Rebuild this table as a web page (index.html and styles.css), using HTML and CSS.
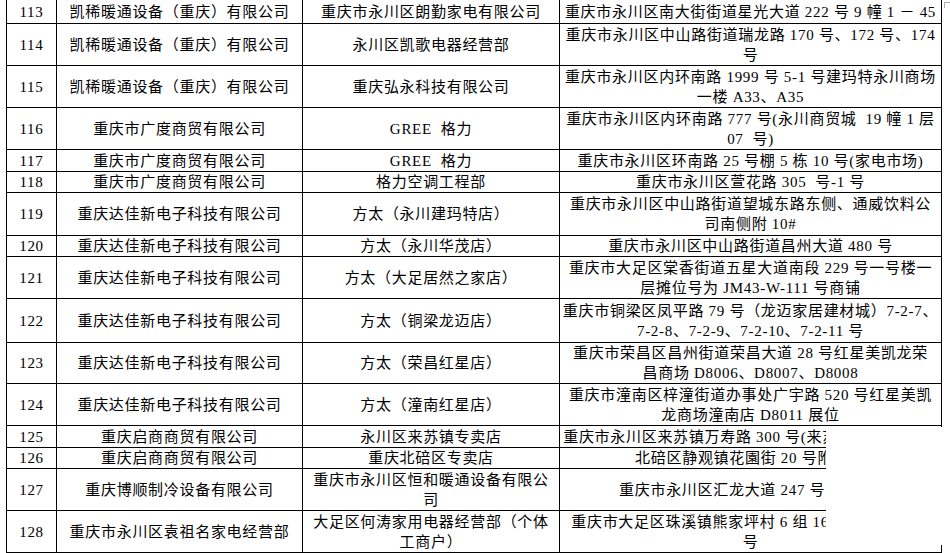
FILE: index.html
```html
<!DOCTYPE html>
<html lang="zh-CN">
<head>
<meta charset="utf-8">
<title>名单</title>
<link rel="stylesheet" href="styles.css">
</head>
<body>
<table class="list">
  <colgroup>
    <col class="c-no">
    <col class="c-co">
    <col class="c-st">
    <col class="c-ad">
  </colgroup>
  <tbody>
    <tr class="first"><td>113</td><td>凯稀暖通设备（重庆）有限公司</td><td>重庆市永川区朗勤家电有限公司</td><td>重庆市永川区南大街街道星光大道 222 号 9 幢 1 － 45</td></tr>
    <tr class="h42"><td>114</td><td>凯稀暖通设备（重庆）有限公司</td><td>永川区凯歌电器经营部</td><td>重庆市永川区中山路街道瑞龙路 170 号、172 号、174<br>号</td></tr>
    <tr class="h42"><td>115</td><td>凯稀暖通设备（重庆）有限公司</td><td>重庆弘永科技有限公司</td><td>重庆市永川区内环南路 1999 号 5-1 号建玛特永川商场<br>一楼 A33、A35</td></tr>
    <tr class="h42"><td>116</td><td>重庆市广度商贸有限公司</td><td>GREE&nbsp; 格力</td><td>重庆市永川区内环南路 777 号(永川商贸城&nbsp; 19 幢 1 层<br>07&nbsp; 号)</td></tr>
    <tr class="h22"><td>117</td><td>重庆市广度商贸有限公司</td><td>GREE&nbsp; 格力</td><td>重庆市永川区环南路 25 号棚 5 栋 10 号(家电市场)</td></tr>
    <tr class="h21"><td>118</td><td>重庆市广度商贸有限公司</td><td>格力空调工程部</td><td>重庆市永川区萱花路 305&nbsp; 号-1 号</td></tr>
    <tr class="h43"><td>119</td><td>重庆达佳新电子科技有限公司</td><td>方太（永川建玛特店）</td><td>重庆市永川区中山路街道望城东路东侧、通威饮料公<br>司南侧附 10#</td></tr>
    <tr class="h21"><td>120</td><td>重庆达佳新电子科技有限公司</td><td>方太（永川华茂店）</td><td>重庆市永川区中山路街道昌州大道 480 号</td></tr>
    <tr class="h42"><td>121</td><td>重庆达佳新电子科技有限公司</td><td>方太（大足居然之家店）</td><td>重庆市大足区棠香街道五星大道南段 229 号一号楼一<br>层摊位号为 JM43-W-111 号商铺</td></tr>
    <tr class="h44"><td>122</td><td>重庆达佳新电子科技有限公司</td><td>方太（铜梁龙迈店）</td><td>重庆市铜梁区凤平路 79 号（龙迈家居建材城）7-2-7、<br>7-2-8、7-2-9、7-2-10、7-2-11 号</td></tr>
    <tr class="h41"><td>123</td><td>重庆达佳新电子科技有限公司</td><td>方太（荣昌红星店）</td><td>重庆市荣昌区昌州街道荣昌大道 28 号红星美凯龙荣<br>昌商场 D8006、D8007、D8008</td></tr>
    <tr class="h42"><td>124</td><td>重庆达佳新电子科技有限公司</td><td>方太（潼南红星店）</td><td>重庆市潼南区梓潼街道办事处广宇路 520 号红星美凯<br>龙商场潼南店 D8011 展位</td></tr>
    <tr class="h22"><td>125</td><td>重庆启商商贸有限公司</td><td>永川区来苏镇专卖店</td><td>重庆市永川区来苏镇万寿路 300 号(来苏镇农贸市场旁)</td></tr>
    <tr class="h21"><td>126</td><td>重庆启商商贸有限公司</td><td>重庆北碚区专卖店</td><td>北碚区静观镇花園街 20 号附 5 号</td></tr>
    <tr class="h42"><td>127</td><td>重庆博顺制冷设备有限公司</td><td>重庆市永川区恒和暖通设备有限公<br>司</td><td>重庆市永川区汇龙大道 247 号附 12 号</td></tr>
    <tr class="h42"><td>128</td><td>重庆市永川区袁祖名家电经营部</td><td>大足区何涛家用电器经营部（个体<br>工商户）</td><td>重庆市大足区珠溪镇熊家坪村 6 组 168 号附 1 号、2<br>号</td></tr>
  </tbody>
</table>
<div class="cover"></div>
<div class="corner-mark"></div>
</body>
</html>
```

FILE: styles.css
```css
html, body {
  margin: 0;
  padding: 0;
  background: #ffffff;
}

body {
  position: relative;
  width: 950px;
  height: 553px;
  overflow: hidden;
  font-family: "Liberation Serif", "Noto Sans CJK SC", serif;
  font-size: 15px;
  color: #000000;
}

.list {
  border-collapse: collapse;
  table-layout: fixed;
  width: 936px;
  margin: -2px 0 0 6px;
}

.c-no { width: 50px; }
.c-co { width: 246px; }
.c-st { width: 257px; }
.c-ad { width: 382px; }

.list td {
  border: 1px solid #000000;
  padding: 0;
  line-height: 20px;
  text-align: center;
  vertical-align: middle;
  white-space: nowrap;
  overflow: visible;
  letter-spacing: 0.7px;
  font-weight: 400;
}

.list tr.first td {
  height: 23px;
  padding-bottom: 1px;
  vertical-align: bottom;
}

/* row pitch = height + 1px collapsed border */
.list tr.h21 td { height: 20px; }
.list tr.h22 td { height: 21px; }
.list tr.h41 td { height: 40px; }
.list tr.h42 td { height: 41px; }
.list tr.h43 td { height: 42px; }
.list tr.h44 td { height: 43px; }

.cover {
  position: absolute;
  left: 826px;
  top: 427px;
  width: 116px;
  height: 118px;
  background: #ffffff;
}

.corner-mark {
  position: absolute;
  left: 944px;
  top: 2px;
  width: 6px;
  height: 5px;
  border-left: 1px solid #b0b0b0;
  border-top: 1px solid #b0b0b0;
}
```
